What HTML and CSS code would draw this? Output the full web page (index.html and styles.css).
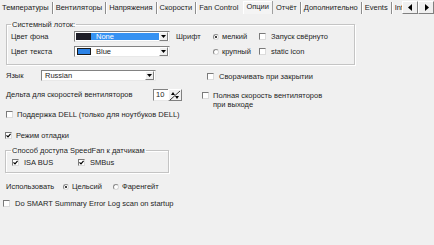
FILE: index.html
```html
<!DOCTYPE html>
<html lang="ru">
<head>
  <meta charset="UTF-8">
  <title>SpeedFan - Опции</title>
  <link rel="stylesheet" href="styles.css">
</head>
<body>
  <div class="tabbar">
    <div class="tabs">
      <span class="tab">Температуры</span>
      <span class="tab">Вентиляторы</span>
      <span class="tab">Напряжения</span>
      <span class="tab">Скорости</span>
      <span class="tab no-sep">Fan Control</span>
      <span class="tab active">Опции</span>
      <span class="tab">Отчёт</span>
      <span class="tab">Дополнительно</span>
      <span class="tab">Events</span>
      <span class="tab">Info</span>
    </div>
    <div class="scroller">
      <span class="arrow">
        <svg width="5" height="7" viewBox="0 0 5 7"><path d="M4 0 L0 3.5 L4 7 Z" fill="#000"/></svg>
      </span>
      <span class="arrow">
        <svg width="5" height="7" viewBox="0 0 5 7"><path d="M1 0 L5 3.5 L1 7 Z" fill="#000"/></svg>
      </span>
    </div>
  </div>

  <div class="page">
    <fieldset class="group tray">
      <legend>Системный лоток:</legend>
      <div class="tray-grid">
        <span>Цвет фона</span>
        <div class="combo">
          <span class="swatch dark"></span>
          <span class="value selected">None</span>
          <span class="drop"><svg width="5" height="3" viewBox="0 0 5 3"><path d="M0 0 H5 L2.5 3 Z" fill="#000"/></svg></span>
        </div>
        <span class="font-label">Шрифт</span>
        <label class="radio"><i class="dot on"></i>мелкий</label>
        <label class="check"><i class="box"></i>Запуск свёрнуто</label>

        <span>Цвет текста</span>
        <div class="combo">
          <span class="swatch blue"></span>
          <span class="value">Blue</span>
          <span class="drop"><svg width="5" height="3" viewBox="0 0 5 3"><path d="M0 0 H5 L2.5 3 Z" fill="#000"/></svg></span>
        </div>
        <span></span>
        <label class="radio"><i class="dot"></i>крупный</label>
        <label class="check"><i class="box"></i>static icon</label>
      </div>
    </fieldset>

    <div class="row lang-row">
      <span class="lang-label">Язык</span>
      <div class="combo lang">
        <span class="value">Russian</span>
        <span class="drop"><svg width="5" height="3" viewBox="0 0 5 3"><path d="M0 0 H5 L2.5 3 Z" fill="#000"/></svg></span>
      </div>
      <label class="check minimize"><i class="box"></i>Сворачивать при закрытии</label>
    </div>

    <div class="row delta-row">
      <span class="delta-label">Дельта для скоростей вентиляторов</span>
      <div class="spin">
        <span class="spin-field">10</span>
        <span class="spin-btn">
          <svg width="12" height="11" viewBox="0 0 12 11">
            <path d="M1 10 L11 1" stroke="#000" stroke-width="0.8"/>
            <path d="M2 5 L4 2 L6 5 Z" fill="#000"/>
            <path d="M6 6 L10 6 L8 9 Z" fill="#000"/>
          </svg>
        </span>
      </div>
      <label class="check fullspeed"><i class="box"></i><span>Полная скорость вентиляторов<br>при выходе</span></label>
    </div>

    <div class="row dell-row">
      <label class="check"><i class="box"></i>Поддержка DELL (только для ноутбуков DELL)</label>
    </div>

    <div class="row debug-row">
      <label class="check"><i class="box checked"><svg width="5" height="5" viewBox="0 0 5 5"><path d="M0.5 2.3 L2 3.8 L4.6 0.8" fill="none" stroke="#000" stroke-width="1.2"/></svg></i>Режим отладки</label>
    </div>

    <fieldset class="group access">
      <legend>Способ доступа SpeedFan к датчикам</legend>
      <div class="access-row">
        <label class="check isa"><i class="box checked"><svg width="5" height="5" viewBox="0 0 5 5"><path d="M0.5 2.3 L2 3.8 L4.6 0.8" fill="none" stroke="#000" stroke-width="1.2"/></svg></i>ISA BUS</label>
        <label class="check"><i class="box checked"><svg width="5" height="5" viewBox="0 0 5 5"><path d="M0.5 2.3 L2 3.8 L4.6 0.8" fill="none" stroke="#000" stroke-width="1.2"/></svg></i>SMBus</label>
      </div>
    </fieldset>

    <div class="row units-row">
      <span class="units-label">Использовать</span>
      <label class="radio celsius"><i class="dot on"></i>Цельсий</label>
      <label class="radio"><i class="dot"></i>Фаренгейт</label>
    </div>

    <div class="row smart-row">
      <label class="check"><i class="box"></i>Do SMART Summary Error Log scan on startup</label>
    </div>
  </div>
</body>
</html>
```

FILE: styles.css
```css
body {
  margin: 0;
  width: 434px;
  height: 245px;
  overflow: hidden;
  background: #f0f0f0;
  color: #1e1e1e;
  font: 7.5px/9px "Liberation Sans", Arial, sans-serif;
}

/* tab strip */
.tabbar {
  display: flex;
  height: 16px;
}
.tabs {
  flex: 1;
  display: flex;
  overflow: hidden;
  white-space: nowrap;
}
.tab {
  margin-top: 2px;
  height: 12px;
  line-height: 12px;
  padding: 0 3px 0 2px;
  border-right: 1px solid #8c8c8c;
  box-shadow: 1px 0 #fff;
  margin-right: 1px;
  color: #222;
}
.tab.no-sep {
  border-right-color: transparent;
  box-shadow: none;
}
.tab.active {
  margin-top: 1px;
  height: 13px;
  padding: 0 3px;
  background: #f4f4f4;
  border-right: 1px solid #a0a0a0;
  box-shadow: inset 1px 1px #fff;
}
.scroller {
  display: flex;
  margin-top: 1px;
  height: 13px;
}
.arrow {
  width: 14px;
  display: flex;
  align-items: center;
  justify-content: center;
  background: #f0f0f0;
  border-top: 1px solid #fff;
  border-left: 1px solid #fff;
  border-right: 1px solid #808080;
  border-bottom: 1px solid #808080;
}

/* group boxes */
.group {
  margin: 0;
  border: 1px solid #c4c4c4;
  box-shadow: inset 1px 1px #fff, 1px 1px #fff;
}
.group legend {
  padding: 0 1px;
  line-height: 9px;
}
.tray {
  margin: 4px 0 0 6px;
  width: 349px;
  box-sizing: border-box;
  padding: 2px 4px 7px 4px;
}
.tray-grid {
  display: grid;
  grid-template-columns: 63px 96px 43px 46px auto;
  grid-auto-rows: 11px;
  row-gap: 4px;
  align-items: center;
}
.font-label {
  padding-left: 6px;
}

/* combo boxes */
.combo {
  display: flex;
  align-items: center;
  height: 11px;
  box-sizing: border-box;
  padding: 1px;
  background: #fff;
  border-top: 1px solid #828282;
  border-left: 1px solid #828282;
  border-right: 1px solid #e8e8e8;
  border-bottom: 1px solid #e8e8e8;
}
.swatch {
  width: 15px;
  height: 7px;
  box-sizing: border-box;
}
.swatch.dark {
  background: #1d1d26;
}
.swatch.blue {
  margin-left: 1px;
  width: 14px;
  background: #2b82e6;
  border: 1px solid #1a1a1a;
}
.value {
  flex: 1;
  height: 7px;
  line-height: 7px;
  padding-left: 5px;
}
.value.selected {
  background: #3692f2;
  color: #fff;
}
.drop {
  width: 7px;
  height: 7px;
  display: flex;
  align-items: center;
  justify-content: center;
  background: #f0f0f0;
  border-top: 1px solid #fff;
  border-left: 1px solid #fff;
  border-right: 1px solid #808080;
  border-bottom: 1px solid #808080;
}

/* check boxes and radio buttons */
.check,
.radio {
  display: flex;
  align-items: center;
  white-space: nowrap;
}
.box {
  width: 7px;
  height: 7px;
  box-sizing: border-box;
  margin-right: 5px;
  flex: none;
  display: flex;
  align-items: center;
  justify-content: center;
  background: #fff;
  border-top: 1px solid #7a7a7a;
  border-left: 1px solid #7a7a7a;
  border-right: 1px solid #dcdcdc;
  border-bottom: 1px solid #dcdcdc;
}
.dot {
  width: 6px;
  height: 6px;
  box-sizing: border-box;
  margin-right: 3px;
  flex: none;
  border-radius: 50%;
  background: #fff;
  border: 1px solid #8a8a8a;
  border-right-color: #d8d8d8;
  border-bottom-color: #d8d8d8;
  position: relative;
}
.dot.on::after {
  content: "";
  position: absolute;
  left: 1px;
  top: 1px;
  width: 2px;
  height: 2px;
  border-radius: 50%;
  background: #000;
}

/* rows below the tray group */
.row {
  display: flex;
  align-items: center;
}
.lang-row {
  margin-top: 5px;
  padding-left: 6px;
}
.lang-label {
  width: 35px;
}
.combo.lang {
  width: 115px;
}
.combo.lang .value {
  padding-left: 2px;
}
.minimize {
  margin-left: 51px;
  margin-top: 1px;
}
.delta-row {
  margin-top: 8px;
  padding-left: 6px;
  align-items: flex-start;
}
.delta-label {
  width: 147px;
  line-height: 12px;
}
.spin {
  display: flex;
  height: 12px;
  width: 29px;
}
.spin-field {
  width: 15px;
  box-sizing: border-box;
  padding-left: 2px;
  line-height: 10px;
  background: #fff;
  border-top: 1px solid #828282;
  border-left: 1px solid #828282;
  border-bottom: 1px solid #e8e8e8;
}
.spin-btn {
  width: 14px;
  box-sizing: border-box;
  display: flex;
  align-items: center;
  justify-content: center;
  background: #f0f0f0;
  border-top: 1px solid #fff;
  border-left: 1px solid #fff;
  border-right: 1px solid #808080;
  border-bottom: 1px solid #808080;
}
.fullspeed {
  margin-left: 20px;
  margin-top: 2px;
  align-items: flex-start;
}
.fullspeed .box {
  margin-top: 1px;
  margin-right: 4px;
}
.dell-row {
  margin-top: 1px;
  padding-left: 6px;
}
.dell-row .box {
  margin-right: 4px;
}
.debug-row {
  margin-top: 12px;
  padding-left: 5px;
}
.debug-row .box {
  margin-right: 4px;
}
.access {
  margin: 6px 0 0 5px;
  width: 164px;
  box-sizing: border-box;
  padding: 3px 5px 5px 5px;
}
.access-row {
  display: flex;
  padding-left: 1px;
}
.isa {
  width: 66px;
}
.units-row {
  margin-top: 9px;
  padding-left: 6px;
}
.units-label {
  width: 57px;
}
.celsius {
  width: 50px;
}
.smart-row {
  margin-top: 8px;
  padding-left: 3px;
}
```
